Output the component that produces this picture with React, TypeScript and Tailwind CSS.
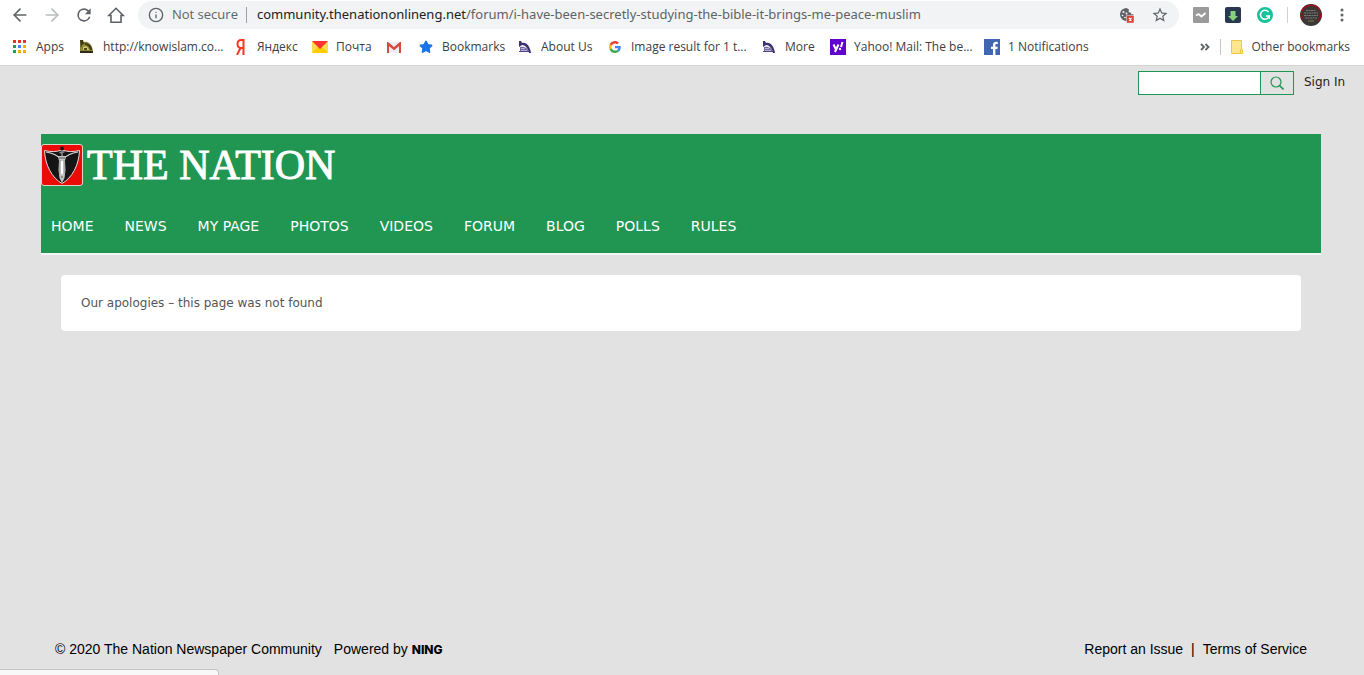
import type { ReactNode } from "react"
import { ArrowLeft, ArrowRight, Info, Star } from "lucide-react"
import clsx from "clsx"

const navItems = ["HOME", "NEWS", "MY PAGE", "PHOTOS", "VIDEOS", "FORUM", "BLOG", "POLLS", "RULES"]

function ReloadIcon() {
  return (
    <svg viewBox="0 0 24 24" className="h-5 w-5" fill="#5f6368">
      <path d="M17.65 6.35A7.96 7.96 0 0 0 12 4a8 8 0 1 0 7.73 10h-2.08A6 6 0 1 1 12 6c1.66 0 3.14.69 4.22 1.78L13 11h7V4z" />
    </svg>
  )
}

function HomeIcon() {
  return (
    <svg viewBox="0 0 20 20" className="h-5 w-5" fill="none" stroke="#5f6368" strokeWidth="1.600">
      <path d="M2.800 10.500 10 3.300l7.200 7.200H15v6.700H5v-6.700z" />
    </svg>
  )
}

function AppsIcon() {
  const colors = ["#ea3323", "#ea3323", "#ea3323", "#1fa055", "#4285f4", "#f9ab00", "#1fa055", "#f9ab00", "#f9ab00"]
  return (
    <svg viewBox="0 0 16 16" className="h-4 w-4">
      {colors.map((color, i) => (
        <rect key={i} x={1 + (i % 3) * 5} y={1 + Math.floor(i / 3) * 5} width="3" height="3" fill={color} />
      ))}
    </svg>
  )
}

function KnowIcon() {
  return (
    <svg viewBox="0 0 16 16" className="h-4 w-4">
      <path d="M1 1h3l1 2c5-1 9 4 9 10H1V8z" fill="#8b8536" />
      <path d="M1 1h3v2l2 1-3 2-1 3zM6 4c4 0 7 3 7 7h-2C11 8 8 6 6 6z" fill="#413c18" />
      <path d="M4 8c3-2 5 0 6 3H4z" fill="#d0c765" />
      <path d="M5 9h3v2H5z" fill="#514b1c" />
      <path d="M1 12h13v2H1z" fill="#2e2c18" />
    </svg>
  )
}

function DomeIcon() {
  return (
    <svg viewBox="0 0 16 16" className="h-4 w-4">
      <path d="M2 2h2l1 2c5-1 8 4 9 10h-2C11 9 8 6 5 6L2 8z" fill="#3d3072" />
      <path d="M3 8c5-1 8 2 9 5H3z" fill="#7468a0" />
      <path d="M4 9.500h4M4 11.500h6" stroke="#b9b2d2" />
      <path d="M2 12.500h10" stroke="#4f4380" />
    </svg>
  )
}

function YandexIcon() {
  return (
    <svg viewBox="0 0 16 16" className="h-4 w-4" fill="none" stroke="#f33a20" strokeWidth="2">
      <path d="M10.500 0v16M11 1H8.500C5.500 1 4.500 2.700 4.500 5s1 4 4 4h2M7.500 9 4 16" />
    </svg>
  )
}

function MailIcon() {
  return (
    <svg viewBox="0 0 16 16" className="h-4 w-4">
      <path d="M0 2h16v12H0z" fill="#ffdb4d" />
      <path d="M0 14 7 7h2l7 7z" fill="#fc0" />
      <path d="M0 2h16L8 10z" fill="#f33" />
    </svg>
  )
}

function GmailIcon() {
  return (
    <svg viewBox="0 0 16 16" className="h-4 w-4">
      <path d="M1 3h14v11H1z" fill="#eceff1" />
      <path d="M2 14V5l6 5 6-5v9" fill="none" stroke="#d54b3d" strokeWidth="2" />
      <path d="M1 3h1l6 5 6-5h1v2l-7 5.500L1 5z" fill="#d54b3d" />
    </svg>
  )
}

function GoogleIcon() {
  return (
    <svg viewBox="0 0 48 48" className="h-3 w-4">
      <path fill="#EA4335" d="M24 9.500c3.540 0 6.710 1.220 9.210 3.600l6.850-6.850C35.900 2.380 30.470 0 24 0 14.620 0 6.510 5.380 2.560 13.220l7.980 6.190C12.430 13.720 17.740 9.500 24 9.500z" />
      <path fill="#4285F4" d="M46.980 24.550c0-1.570-.15-3.090-.38-4.550H24v9.020h12.940c-.58 2.960-2.260 5.480-4.780 7.180l7.730 6c4.510-4.180 7.090-10.360 7.090-17.650z" />
      <path fill="#FBBC05" d="M10.530 28.590A14.500 14.500 0 0 1 9.770 24c0-1.600.27-3.140.76-4.590l-7.980-6.190A23.900 23.900 0 0 0 0 24c0 3.880.92 7.540 2.560 10.780z" />
      <path fill="#34A853" d="M24 48c6.480 0 11.930-2.130 15.890-5.810l-7.730-6c-2.150 1.450-4.920 2.300-8.160 2.300-6.260 0-11.570-4.220-13.470-9.910l-7.980 6.190C6.510 42.620 14.620 48 24 48z" />
    </svg>
  )
}

function YahooIcon() {
  return (
    <svg viewBox="0 0 16 16" className="h-4 w-4">
      <path d="M0 0h16v16H0z" fill="#6001d2" />
      <path d="m3.500 5.500 2.500 5M8.500 5.500 5 13M12.500 3l-1.500 5" stroke="#fff" strokeWidth="2" />
      <circle cx="10" cy="10" r="1.200" fill="#fff" />
    </svg>
  )
}

function FacebookIcon() {
  return (
    <svg viewBox="0 0 16 16" className="h-4 w-4">
      <path d="M0 0h16v16H0z" fill="#4267b2" />
      <path d="M9 16v-6H7V7.700h2V6c0-2 1.200-3.200 3.100-3.200l1.700.1V5h-1.200c-1 0-1.200.5-1.200 1.200v1.500h2.300L13.400 10h-2v6z" fill="#fff" />
    </svg>
  )
}

function FolderIcon() {
  return (
    <svg viewBox="0 0 16 16" className="h-4 w-4">
      <path d="M2.500 1.500h10v9h1v4h-11z" fill="#ffe68f" stroke="#edc548" />
      <path d="M11.500 14v-3.500h1" fill="none" stroke="#edc548" />
    </svg>
  )
}

function CookieIcon() {
  return (
    <svg viewBox="0 0 16 16" className="h-4 w-4">
      <path d="M7.500 1a6.500 6.500 0 1 0 6 9l1-3-2 .5-1-2-2-.5.500-2.500z" fill="#5f6368" />
      <g fill="#fff">
        <circle cx="4.500" cy="5" r="1" />
        <circle cx="3.500" cy="8.500" r=".8" />
        <circle cx="7.500" cy="6.500" r=".9" />
        <circle cx="6" cy="10.500" r=".8" />
      </g>
      <path d="M7.500 8.500H15V16H7.500z" fill="#db4437" stroke="#f1f3f4" strokeWidth=".5" />
      <path d="m10 11 2.500 2.500m0-2.500L10 13.500" stroke="#fff" strokeWidth="1.200" />
    </svg>
  )
}

function StarIcon() {
  return (
    <svg viewBox="0 0 24 24" className="h-[18px] w-[18px]" fill="#5f6368">
      <path d="m22 9.240-7.190-.62L12 2 9.190 8.630 2 9.240l5.460 4.730L5.820 21 12 17.270 18.180 21l-1.630-7.030zM12 15.400l-3.760 2.270 1-4.280-3.320-2.880 4.380-.38L12 6.100l1.710 4.040 4.380.38-3.320 2.880 1 4.280z" />
    </svg>
  )
}

function CheckExtension() {
  return (
    <svg viewBox="0 0 16 16" className="h-4 w-4">
      <rect width="16" height="16" rx="1" fill="#9b9b9b" />
      <path d="m3 8.500 2.500-1.500L8.500 9.500 12.500 6" fill="none" stroke="#fff" strokeWidth="1.800" />
    </svg>
  )
}

function DownloadExtension() {
  return (
    <svg viewBox="0 0 16 16" className="h-4 w-4">
      <rect width="16" height="16" rx="2" fill="#28384f" />
      <path d="M5.500 4h5v5H13l-5 5-5-5h2.500z" fill="#87d37c" />
    </svg>
  )
}

function GrammarlyExtension() {
  return (
    <svg viewBox="0 0 16 16" className="h-4 w-4">
      <circle cx="8" cy="8" r="8" fill="#15c39a" />
      <path d="M11.500 5A4.500 4.500 0 1 0 12.300 9H9" fill="none" stroke="#fff" strokeWidth="1.500" />
      <path d="M12.300 8.500V12" stroke="#fff" strokeWidth="1.200" />
    </svg>
  )
}

function Avatar() {
  return (
    <svg viewBox="0 0 22 22" className="h-[22px] w-[22px]">
      <circle cx="11" cy="11" r="11" fill="#3b3837" />
      <path d="M2 7a10 10 0 0 1 18 0M20.500 9a10 10 0 0 1-2 8M1.500 9a10 10 0 0 0 1 6" fill="none" stroke="#a50c12" strokeWidth="1.500" />
      <path d="M6 6.500h10M4 9h14M4 11.500h14M5 14h12" stroke="#7d7876" strokeDasharray="2 .5" />
      <path d="M8 17h6" stroke="#8a7c48" />
    </svg>
  )
}

// each bookmark keeps its own slot, long titles run into the gap after it
const bookmarks: { label: string; width: string; icon: ReactNode }[] = [
  { label: "Apps", width: "w-[51px]", icon: <AppsIcon /> },
  { label: "http://knowislam.co...", width: "w-[138px]", icon: <KnowIcon /> },
  { label: "Яндекс", width: "w-[63px]", icon: <YandexIcon /> },
  { label: "Почта", width: "w-[58px]", icon: <MailIcon /> },
  { label: "", width: "w-4", icon: <GmailIcon /> },
  { label: "Bookmarks", width: "w-[83px]", icon: <Star className="h-4 w-4 fill-[#1a73e8] p-px text-[#1a73e8]" /> },
  { label: "About Us", width: "w-[74px]", icon: <DomeIcon /> },
  { label: "Image result for 1 t...", width: "w-[138px]", icon: <GoogleIcon /> },
  { label: "More", width: "w-[53px]", icon: <DomeIcon /> },
  { label: "Yahoo! Mail: The be...", width: "w-[138px]", icon: <YahooIcon /> },
  { label: "1 Notifications", width: "w-[104px]", icon: <FacebookIcon /> },
]

function BrowserBar() {
  return (
    <header className="border-b border-[#d4d4d4] bg-white font-['Open_Sans','Noto_Sans',sans-serif] text-[#3c4043]">
      <div className="flex h-[30px] items-center pr-3.5 pl-2.5">
        <div className="flex items-center gap-3">
          <button aria-label="Back"><ArrowLeft className="h-5 w-5 text-[#5f6368]" /></button>
          <button aria-label="Forward"><ArrowRight className="h-5 w-5 text-[#babcbe]" /></button>
          <button aria-label="Reload"><ReloadIcon /></button>
          <button aria-label="Home"><HomeIcon /></button>
        </div>
        <div className="ml-3 flex h-7 flex-1 items-center rounded-full bg-[#f1f3f4] px-2.5 text-[13px] whitespace-nowrap">
          <Info className="h-4 w-4 text-[#5f6368]" />
          <span className="ml-2 text-[#5f6368]">Not secure</span>
          <span className="mr-2.5 ml-2 h-4 w-px bg-[#9aa0a6]" />
          <span className="flex-1 font-['Noto_Sans',sans-serif] text-[#5f6368]">
            <span className="text-[#202124]">community.thenationonlineng.net</span>
            /forum/i-have-been-secretly-studying-the-bible-it-brings-me-peace-muslim
          </span>
          <button aria-label="Cookies blocked" className="mr-4"><CookieIcon /></button>
          <button aria-label="Bookmark this page"><StarIcon /></button>
        </div>
        <div className="ml-3.5 flex items-center gap-4">
          <button aria-label="Checker"><CheckExtension /></button>
          <button aria-label="Downloader"><DownloadExtension /></button>
          <button aria-label="Grammar"><GrammarlyExtension /></button>
        </div>
        <span className="mr-3 ml-3.5 h-4 w-px bg-[#d0d3d6]" />
        <button aria-label="Profile"><Avatar /></button>
        <button aria-label="Menu" className="ml-3">
          <svg viewBox="0 0 16 16" className="h-4 w-4" fill="#5f6368">
            <circle cx="8" cy="3" r="1.500" />
            <circle cx="8" cy="8" r="1.500" />
            <circle cx="8" cy="13" r="1.500" />
          </svg>
        </button>
      </div>
      <div className="flex h-[35px] items-center pr-3.5 pb-0.5 pl-3 text-xs whitespace-nowrap">
        <nav className="flex flex-1 items-center gap-4">
          {bookmarks.map((item, i) => (
            <a key={i} href="#" aria-label={item.label || "Gmail"} className={clsx("flex items-center gap-2", item.width)}>
              <span className="shrink-0">{item.icon}</span>
              {item.label && <span>{item.label}</span>}
            </a>
          ))}
        </nav>
        <button aria-label="More bookmarks">
          <svg viewBox="0 0 10 10" className="h-2.5 w-2.5" fill="none" stroke="#5f6368" strokeWidth="1.800">
            <path d="m1 2 3 3-3 3M5.500 2l3 3-3 3" />
          </svg>
        </button>
        <span className="mr-2 ml-2.5 h-4 w-px bg-[#c4c7ca]" />
        <a href="#" className="flex items-center gap-1.5">
          <FolderIcon />
          <span>Other bookmarks</span>
        </a>
      </div>
    </header>
  )
}

function Emblem() {
  return (
    <svg viewBox="0 0 42 42" className="h-[42px] w-[42px]">
      <rect x=".5" y=".5" width="41" height="41" rx="2.500" fill="#ea0a06" stroke="#d8d8c8" />
      <path d="M3.500 6.500C10 8 15 8 21 6c6 2 11 2 17.500.500C38 21 31 34 21 39.500 11 34 4 21 3.500 6.500z" fill="#151515" stroke="#e6dcdc" />
      <path d="M5 8c6 1 11 3 15 7M37 8c-6 1-11 3-15 7" fill="none" stroke="#d5d5d5" strokeWidth="1.200" />
      <circle cx="21" cy="4.500" r="2" fill="#171717" />
      <path d="M18.500 9c2-1.500 3 0 5-1.500M21 7v5" stroke="#8f8f8f" strokeWidth="1.500" />
      <path d="M17 12h8l-1 5 .5 9-1 8-2.500 5-2.500-5-1-8 .5-9z" fill="#c4c4c4" />
      <path d="M18 14h6M20 33h2" stroke="#555" />
      <path d="M21 17v13" stroke="#fff" strokeWidth="3" />
      <path d="M19 16v14M23 16v14" stroke="#777" strokeWidth=".7" />
    </svg>
  )
}

function SiteHeader() {
  return (
    <header className="mr-[43px] ml-[41px] border-b-2 border-[#f5f5f5] bg-[#219653]">
      <a href="#" aria-label="The Nation" className="flex h-[62px] items-center gap-1">
        <Emblem />
        <span className="font-['Liberation_Serif',serif] text-[42px] leading-none text-white [-webkit-text-stroke:1px_white]">
          THE NATION
        </span>
      </a>
      <nav className="flex h-[57px] gap-[31px] px-2.5 pt-5 text-sm text-white">
        {navItems.map((item) => (
          <a key={item} href="#">{item}</a>
        ))}
      </nav>
    </header>
  )
}

export default function App() {
  return (
    <div className="relative flex min-h-screen flex-col overflow-hidden bg-[#e2e2e2] font-['DejaVu_Sans',sans-serif]">
      <BrowserBar />
      <div className="flex h-[68px] items-start justify-end gap-2.5 pt-[5px] pr-4">
        <form className="flex h-6 w-[156px] border border-[#219653]">
          <input type="search" aria-label="Search" className="min-w-0 flex-1 bg-white px-1 text-xs outline-none" />
          <button type="button" aria-label="Submit search" className="flex w-[33px] items-center justify-center border-l border-[#219653]">
            <svg viewBox="0 0 14 14" className="h-3.5 w-3.5" fill="none" stroke="#219653" strokeWidth="1.200">
              <circle cx="6" cy="6" r="5" />
              <path d="m9.500 9.500 4 4" strokeWidth="1.600" />
            </svg>
          </button>
        </form>
        <a href="#" className="w-11 text-xs leading-[22px] text-[#1c1c1c]">Sign In</a>
      </div>
      <SiteHeader />
      <main className="flex-1 pt-5 pr-[63px] pl-[61px]">
        <p className="rounded bg-white p-5 text-xs leading-4 text-[#555]">Our apologies – this page was not found</p>
      </main>
      <footer className="flex justify-between pr-[57px] pb-4 pl-[55px] font-['Liberation_Sans',Arial,sans-serif] text-sm leading-5 text-black">
        <div className="flex gap-3">
          <span>© 2020 The Nation Newspaper Community</span>
          <span>
            Powered by{" "}
            <a href="#" className="font-['Inter',sans-serif] text-xs font-extrabold">NING</a>
          </span>
        </div>
        <div className="flex gap-2">
          <a href="#">Report an Issue</a>
          <span>|</span>
          <a href="#">Terms of Service</a>
        </div>
      </footer>
      {/* Status bubble */}
      <div className="absolute bottom-0 left-0 h-1.5 w-[219px] rounded-tr border-t border-r border-[#c4c4c4] bg-[#f8f8f8]" />
    </div>
  )
}
